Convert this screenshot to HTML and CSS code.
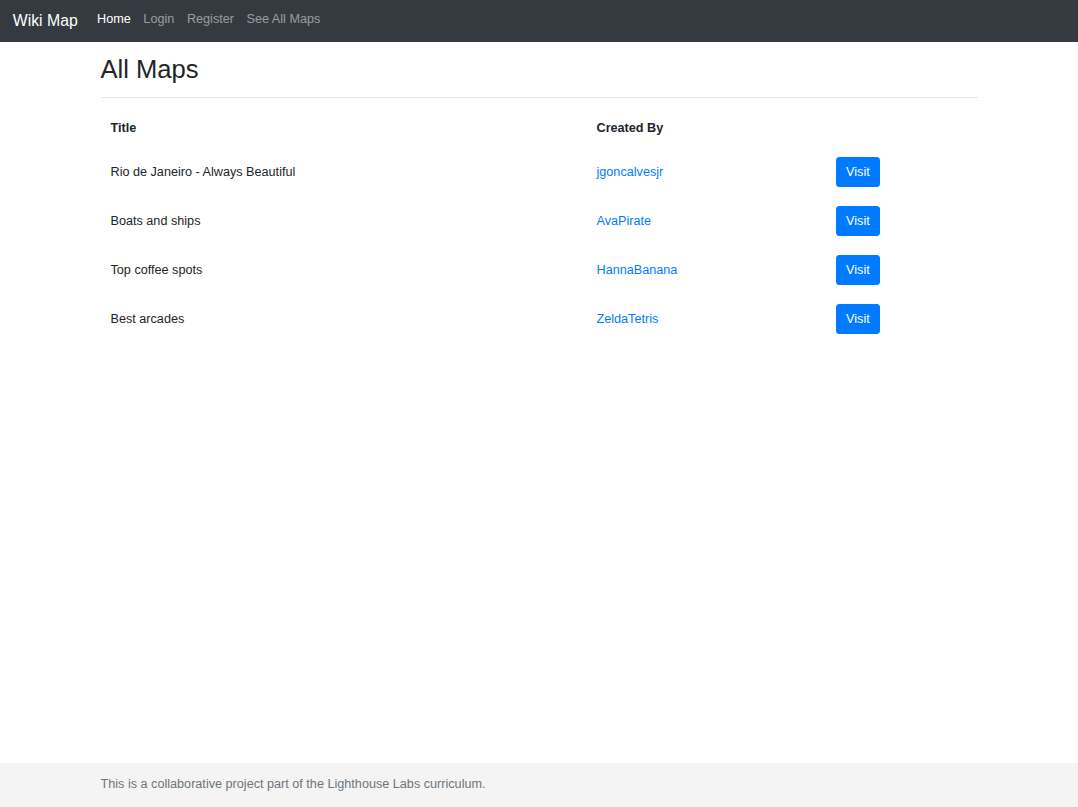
FILE: index.html
```html
<!DOCTYPE html>
<html lang="en">
<head>
<meta charset="utf-8">
<title>Wiki Map</title>
<link rel="stylesheet" href="styles.css">
</head>
<body>
<div class="page">
  <nav class="navbar">
    <a class="brand" href="#">Wiki Map</a>
    <ul class="nav">
      <li><a class="nav-link active" href="#">Home</a></li>
      <li><a class="nav-link" href="#">Login</a></li>
      <li><a class="nav-link" href="#">Register</a></li>
      <li><a class="nav-link" href="#">See All Maps</a></li>
    </ul>
  </nav>
  <main class="container">
    <h2 class="title">All Maps</h2>
    <hr class="rule">
    <table class="maps">
      <thead>
        <tr><th class="col-title">Title</th><th class="col-user">Created By</th><th></th></tr>
      </thead>
      <tbody>
        <tr><td>Rio de Janeiro - Always Beautiful</td><td><a href="#">jgoncalvesjr</a></td><td><a class="btn" href="#">Visit</a></td></tr>
        <tr><td>Boats and ships</td><td><a href="#">AvaPirate</a></td><td><a class="btn" href="#">Visit</a></td></tr>
        <tr><td>Top coffee spots</td><td><a href="#">HannaBanana</a></td><td><a class="btn" href="#">Visit</a></td></tr>
        <tr><td>Best arcades</td><td><a href="#">ZeldaTetris</a></td><td><a class="btn" href="#">Visit</a></td></tr>
      </tbody>
    </table>
  </main>
  <footer class="footer">
    <div class="container footer-inner">This is a collaborative project part of the Lighthouse Labs curriculum.</div>
  </footer>
</div>
</body>
</html>
```
FILE: styles.css
```css
* { box-sizing: border-box; }
html, body { margin: 0; padding: 0; }
body {
  font-family: "Liberation Sans", Arial, sans-serif;
  font-size: 12.65px;
  line-height: 1.5;
  color: #212529;
  background: #fff;
}
a { color: #007bff; text-decoration: none; }
.page { min-height: 100vh; display: flex; flex-direction: column; }
.navbar {
  height: 42px;
  background: #343a40;
  display: flex;
  align-items: center;
  padding: 0 12.8px;
}
.brand {
  color: #fff;
  font-size: 15.8px;
  margin-right: 13px;
  line-height: 24px;
}
.nav { list-style: none; margin: 0; padding: 0; display: flex; }
.nav-link {
  display: block;
  padding: 0 6.3px;
  color: rgba(255,255,255,.5);
  line-height: 19.2px;
  margin-top: -2px;
}
.nav-link.active { color: #fff; }
.container { width: 877px; margin: 0 auto; }
.title {
  font-size: 25.6px;
  font-weight: 500;
  line-height: 1.2;
  margin: 12px 0 0;
}
.rule {
  border: 0;
  border-top: 1px solid rgba(0,0,0,.1);
  margin: 12px 0 12px;
}
.maps { width: 100%; border-collapse: collapse; }
.maps th, .maps td {
  padding: 9.6px 10px;
  text-align: left;
  vertical-align: middle;
}
.maps th { font-weight: bold; }
.col-title { width: 486px; }
.col-user { width: 239px; }
.btn {
  display: inline-block;
  background: #007bff;
  color: #fff;
  border: 1px solid #007bff;
  border-radius: 3px;
  padding: 4.5px 9.6px;
  line-height: 18.8px;
}
.footer {
  margin-top: auto;
  background: #f4f4f4;
  height: 44px;
  display: flex;
  align-items: center;
  padding-bottom: 2px;
}
.footer-inner { color: #6c757d; }
```
